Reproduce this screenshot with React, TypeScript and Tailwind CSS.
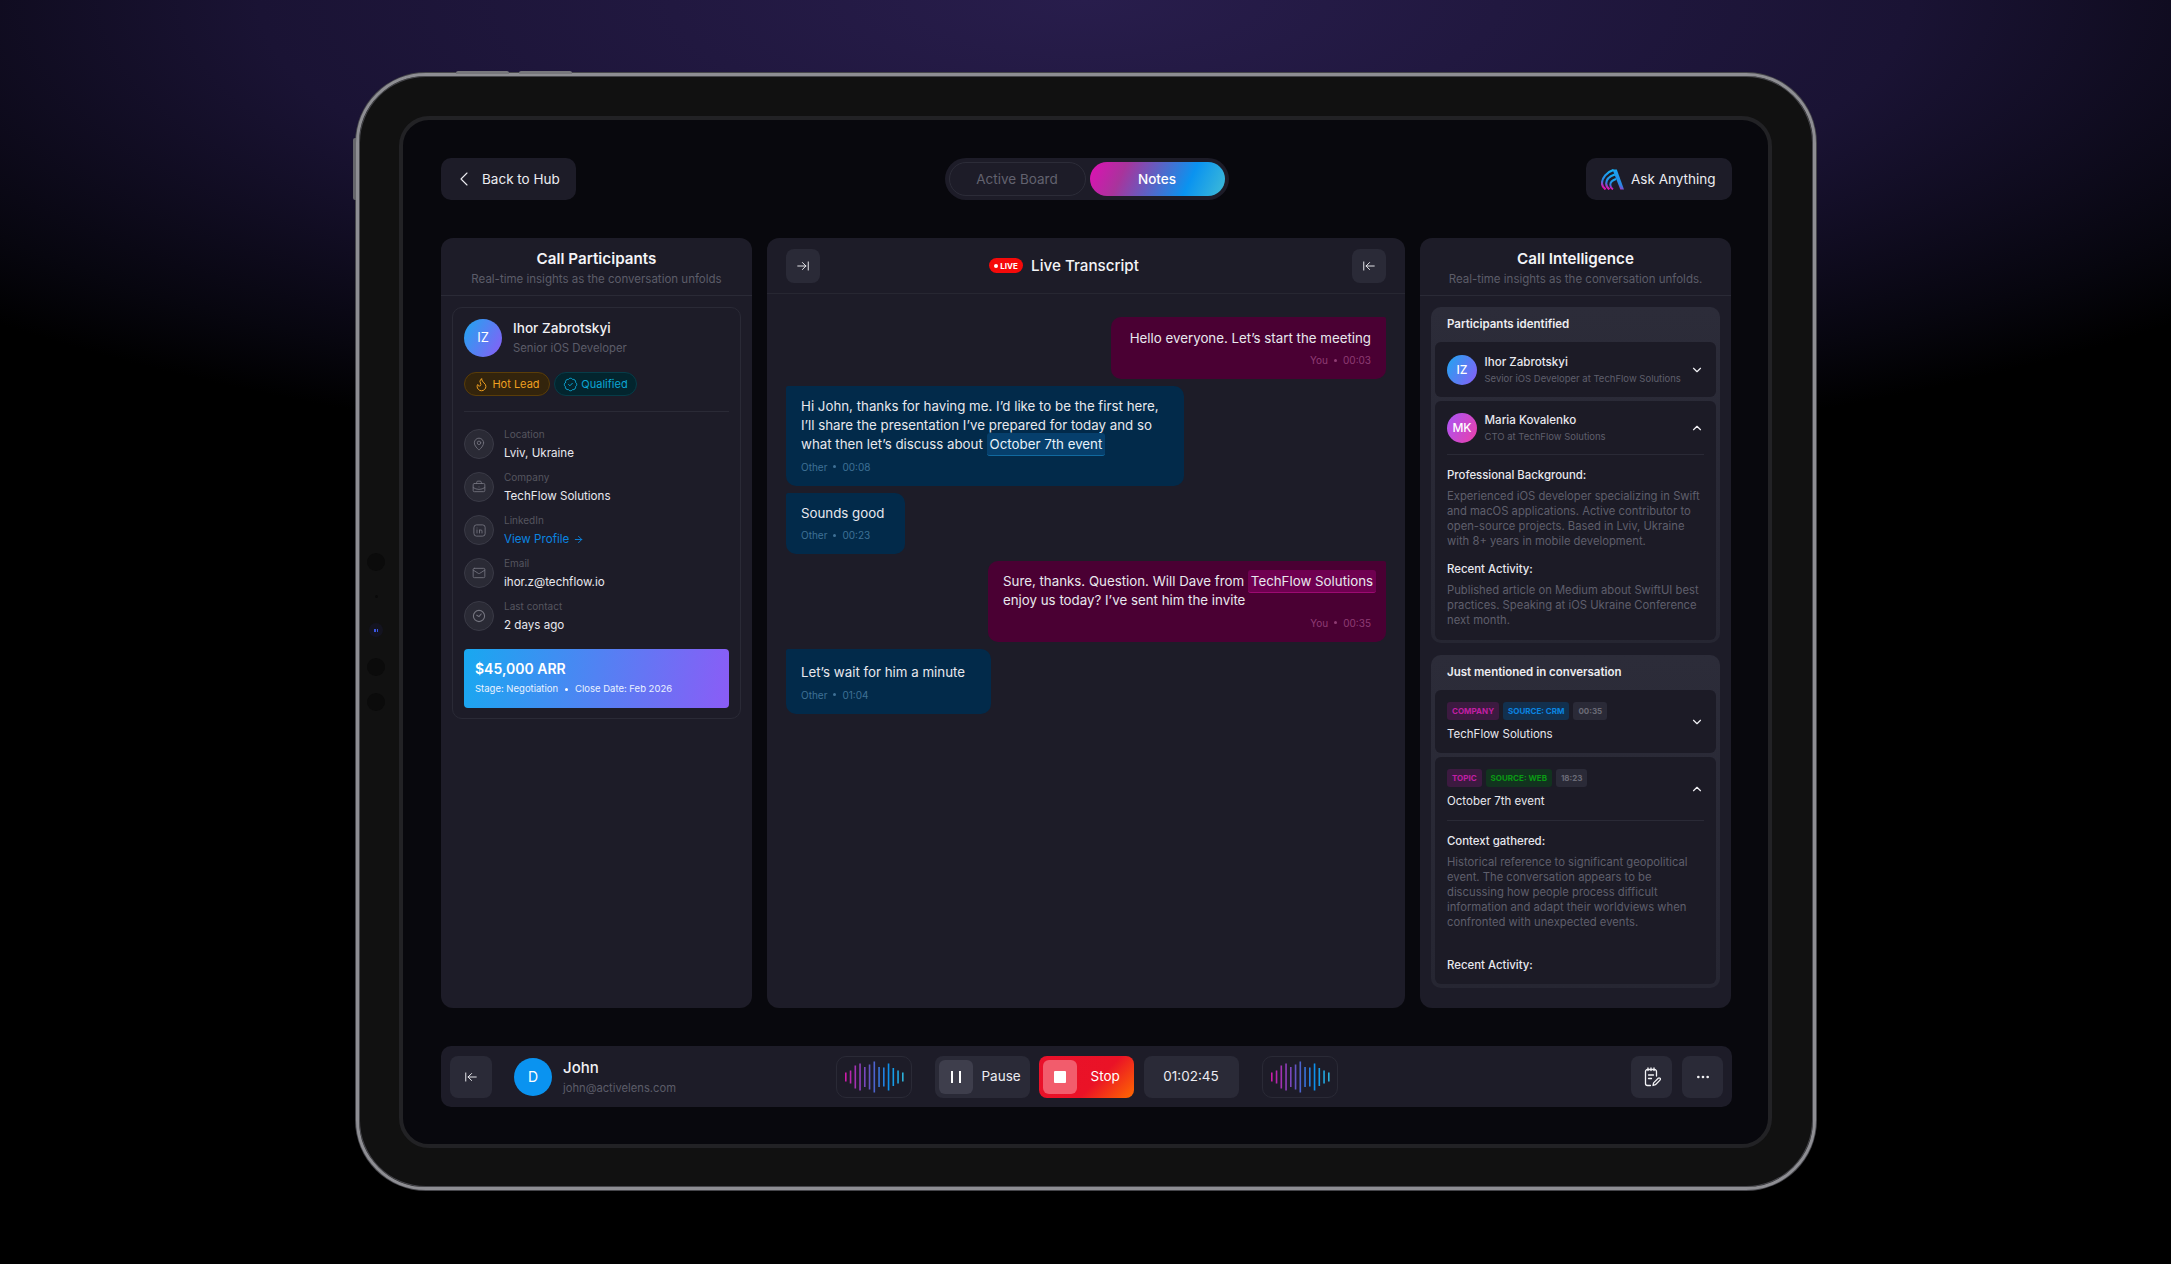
import {
  ArrowLeftToLine,
  ArrowRight,
  ArrowRightToLine,
  BadgeCheck,
  BriefcaseBusiness,
  ChevronDown,
  ChevronLeft,
  ChevronUp,
  Ellipsis,
  Flame,
  Mail,
  MapPin,
} from "lucide-react";
import { TbBrandLinkedin } from "react-icons/tb";
import type { ReactNode } from "react";

const details = [
  { label: "Location", value: "Lviv, Ukraine", icon: <MapPin size={14} strokeWidth={1.5} /> },
  { label: "Company", value: "TechFlow Solutions", icon: <BriefcaseBusiness size={14} strokeWidth={1.5} /> },
  { label: "LinkedIn", value: "link", icon: <TbBrandLinkedin size={15} strokeWidth={1.4} /> },
  { label: "Email", value: "ihor.z@techflow.io", icon: <Mail size={14} strokeWidth={1.5} /> },
  { label: "Last contact", value: "2 days ago", icon: <ClockTick /> },
];

const waveHeights = [9, 13, 23, 27, 20, 25, 31, 20, 19, 27, 18, 13, 9];

function ClockTick() {
  return (
    <svg width="14" height="14" viewBox="0 0 14 14" fill="none" stroke="currentColor" strokeWidth="1.1" strokeLinecap="round">
      <circle cx="7" cy="7" r="5.6" />
      <path d="M4.8 6.2 7 7.6 9.2 5" />
    </svg>
  );
}

function Logo() {
  return (
    <svg width="23" height="21" viewBox="0 0 23 21" fill="none">
      <defs>
        <linearGradient id="logo" x1="0.75" y1="0" x2="0.4" y2="1">
          <stop offset="0" stopColor="#14b0f5" />
          <stop offset="0.7" stopColor="#2a86e4" />
          <stop offset="1" stopColor="#de12ae" />
        </linearGradient>
      </defs>
      <path d="M11.500 .5h4.300L23 20.500h-3.700z" fill="url(#logo)" />
      <path d="M12.500 1C6 2.800.8 9 1 14.500c.1 2.600 1.600 4.500 3.600 5.800" stroke="url(#logo)" strokeWidth="2.200" />
      <path d="M13.800 5.500C9.500 7 5.200 10.300 5.200 14.500c0 2.500 1.400 4.500 3.200 5.800" stroke="url(#logo)" strokeWidth="2.200" />
      <path d="M15 10C12 11 9.300 13 9.300 15.800c0 2 1 3.500 2.700 4.500" stroke="url(#logo)" strokeWidth="2" />
    </svg>
  );
}

function NotesIcon() {
  return (
    <svg width="18" height="20" viewBox="0 0 18 20" fill="none" stroke="#f2f2f5" strokeWidth="1.3" strokeLinecap="round" strokeLinejoin="round">
      <path d="M13.500 9V4.500a2 2 0 0 0-2-2h-7a2 2 0 0 0-2 2v12a2 2 0 0 0 2 2h3" />
      <path d="M5 1v2.500M8 1v2.500M11 1v2.500M5.500 8h5M5.500 11.500h3" />
      <path d="M10 18.500l.6-2.600 4.600-4.600a1.200 1.200 0 0 1 1.800 1.800l-4.600 4.600z" />
    </svg>
  );
}

function Wave({ id }: { id: string }) {
  return (
    <div className="flex h-[42px] w-[76px] items-center justify-center rounded-[10px] border border-[#2a2a36]">
      <svg width="60" height="32" viewBox="0 0 60 32">
        <defs>
          <linearGradient id={id} x1="0" y1="0" x2="60" y2="0" gradientUnits="userSpaceOnUse">
            <stop offset="0" stopColor="#d616a8" />
            <stop offset="0.4" stopColor="#6a4fc0" />
            <stop offset="0.75" stopColor="#0a92ee" />
            <stop offset="1" stopColor="#2fb4d8" />
          </linearGradient>
        </defs>
        {waveHeights.map((h, i) => (
          <rect key={i} x={1 + i * 4.75} y={16 - h / 2} width="1.6" height={h} fill={`url(#${id})`} />
        ))}
      </svg>
    </div>
  );
}

function IconButton({ children, className }: { children: ReactNode; className: string }) {
  return (
    <button className={`flex items-center justify-center rounded-[8px] bg-[#2a2a37] text-[#f2f2f5] ${className}`}>
      {children}
    </button>
  );
}

function Meta({ who, time, tone }: { who: string; time: string; tone: string }) {
  return (
    <p className={`mt-[5.500px] flex items-center gap-[6px] text-[10px] leading-[14px] ${tone}`}>
      <span>{who}</span>
      <span className="h-[3px] w-[3px] rounded-full bg-current" />
      <span>{time}</span>
    </p>
  );
}

function Tag({ text, tone }: { text: string; tone: string }) {
  return (
    <span className={`flex h-[18px] items-center rounded-[3px] px-[5px] text-[8px] font-bold ${tone}`}>
      {text}
    </span>
  );
}

function PersonRow({ initials, gradient, name, role, open }: { initials: string; gradient: string; name: string; role: string; open: boolean }) {
  return (
    <div className={`flex items-center px-[12px] ${open ? "h-[53px]" : "h-[55px]"}`}>
      <div className={`flex h-[30px] w-[30px] items-center justify-center rounded-full text-[12px] font-medium text-white ${gradient}`}>
        {initials}
      </div>
      <div className="ml-[7.500px] min-w-0 flex-1">
        <p className="text-[11.600px] font-medium leading-[16px] text-[#e8e8ee]">{name}</p>
        <p className="mt-[1px] text-[9.500px] leading-[15px] text-[#5f5f6c]">{role}</p>
      </div>
      {open ? <ChevronUp size={14} className="text-[#f0f0f4]" /> : <ChevronDown size={14} className="text-[#f0f0f4]" />}
    </div>
  );
}

function MentionRow({ tags, title, open }: { tags: ReactNode; title: string; open: boolean }) {
  return (
    <div className="flex h-[63px] items-center px-[12px]">
      <div className="flex-1">
        <div className="flex gap-[4px]">{tags}</div>
        <p className="mt-[6px] text-[11.500px] leading-[16px] text-[#e8e8ee]">{title}</p>
      </div>
      {open ? <ChevronUp size={14} className="text-[#f0f0f4]" /> : <ChevronDown size={14} className="text-[#f0f0f4]" />}
    </div>
  );
}

function PanelHeader({ title, subtitle }: { title: string; subtitle: string }) {
  return (
    <div className="h-[58px] border-b border-[#2a2a36] pt-[11px] text-center">
      <h2 className="text-[15.200px] font-semibold leading-[20px] text-[#f4f4f7]">{title}</h2>
      <p className="mt-[1px] text-[11.500px] leading-[18px] text-[#5c5c69]">{subtitle}</p>
    </div>
  );
}

export default function App() {
  return (
    <div className="h-[1264px] w-[2171px] overflow-hidden bg-[radial-gradient(ellipse_1500px_470px_at_1085px_0px,#281d4c_0%,#1a1334_55%,#07060f_88%,#000000_100%)] pl-[356px] pt-[73px] [font-family:Inter,sans-serif]">
      {/* Tablet */}
      <div className="relative h-[1117px] w-[1460px] rounded-[70px] border-[3px] border-[#8e8e93] bg-[#111111] p-[40px] shadow-[0_0_0_1px_#46464b,inset_0_0_0_1px_#46464b]">
        <span className="absolute left-[97px] top-[-5px] h-[3px] w-[53px] rounded-t-[2px] bg-[#77777c]" />
        <span className="absolute left-[160px] top-[-5px] h-[3px] w-[53px] rounded-t-[2px] bg-[#77777c]" />
        <span className="absolute left-[-6px] top-[62px] h-[62px] w-[3px] rounded-l-[2px] bg-[#66666b]" />

        {/* Camera dots */}
        <span className="absolute left-[8px] top-[477px] h-[18px] w-[18px] rounded-full bg-[#0b0b0b]" />
        <span className="absolute left-[15.500px] top-[519px] h-[3px] w-[3px] rounded-full bg-[#0a0a0a]" />
        <span className="absolute left-[10px] top-[547px] flex h-[14px] w-[14px] items-center justify-center gap-[1px] rounded-full bg-[#141420]">
          <i className="h-[3px] w-[1.500px] bg-[#3a56e0]" />
          <i className="h-[3px] w-[1.500px] bg-[#3a56e0]" />
        </span>
        <span className="absolute left-[8px] top-[582px] h-[18px] w-[18px] rounded-full bg-[#0b0b0b]" />
        <span className="absolute left-[8px] top-[617px] h-[18px] w-[18px] rounded-full bg-[#0b0b0b]" />

        {/* Screen */}
        <div className="h-[1032px] w-[1373px] rounded-[30px] border-[4px] border-[#222225] bg-[#08080d] pb-[37px] pl-[38px] pr-[36px] pt-[38px]">
          <div className="grid h-[42px] grid-cols-[1fr_auto_1fr] items-center">
            <button className="flex h-[42px] w-[135px] items-center justify-self-start rounded-[10px] bg-[#1d1c28] pl-[11px] text-[13.500px] text-[#ececf1]">
              <ChevronLeft size={24} strokeWidth={1.1} />
              <span className="ml-[6px]">Back to Hub</span>
            </button>
            <div className="flex h-[42px] w-[284px] items-center gap-[4px] rounded-full bg-[#1d1c28] p-[4px]">
              <span className="flex h-[34px] flex-1 items-center justify-center rounded-full border border-[#2c2c38] text-[13.500px] text-[#62626f]">
                Active Board
              </span>
              <span className="flex h-[34px] flex-1 items-center justify-center rounded-full bg-[linear-gradient(115deg,#e00fb4_0%,#a8349c_25%,#0a93f0_72%,#40bcd6_100%)] text-[13.500px] font-medium text-white">
                Notes
              </span>
            </div>
            <button className="flex h-[42px] w-[146px] items-center justify-self-end rounded-[10px] bg-[#1d1c28] pl-[15px] text-[13.500px] text-[#ececf1]">
              <Logo />
              <span className="ml-[7px]">Ask Anything</span>
            </button>
          </div>

          {/* Panels */}
          <div className="mt-[38px] grid h-[770px] grid-cols-[311px_638px_311px] gap-[15px]">
            <section className="rounded-[12px] bg-[#1d1c28]">
              <PanelHeader title="Call Participants" subtitle="Real-time insights as the conversation unfolds" />
              <div className="mx-[11px] mt-[11px] rounded-[10px] border border-[#2a2a36] px-[11px] pb-[10px] pt-[11px]">
                <div className="flex h-[38px] items-center">
                  <div className="flex h-[38px] w-[38px] items-center justify-center rounded-full bg-[linear-gradient(120deg,#1ea7f0,#8b5cf6)] text-[13px] text-white">
                    IZ
                  </div>
                  <div className="ml-[11px]">
                    <p className="text-[13.600px] font-medium leading-[18px] text-[#f0f0f4]">Ihor Zabrotskyi</p>
                    <p className="mt-[2px] text-[11.300px] leading-[18px] text-[#5c5c69]">Senior iOS Developer</p>
                  </div>
                </div>
                <div className="mt-[15px] flex gap-[4px]">
                  <span className="flex h-[24px] w-[86px] items-center justify-center gap-[3px] rounded-full border border-[#5a3d08] bg-[#33240c] text-[11px] text-[#f0a020]">
                    <Flame size={15} strokeWidth={1.6} />
                    Hot Lead
                  </span>
                  <span className="flex h-[24px] w-[83px] items-center justify-center gap-[3px] rounded-full border border-[#063c48] bg-[#03252e] text-[11px] text-[#0ca6d4]">
                    <BadgeCheck size={15} strokeWidth={1.6} />
                    Qualified
                  </span>
                </div>
                <div className="mt-[15px] h-px bg-[#2a2a36]" />
                <div className="mt-[17px] flex flex-col gap-[13px]">
                  {details.map((d) => (
                    <div key={d.label} className="flex h-[30px] items-center">
                      <div className="flex h-[30px] w-[30px] items-center justify-center rounded-full border border-[#3a3a46] bg-[#2a2a35] text-[#74747f]">
                        {d.icon}
                      </div>
                      <div className="ml-[10px]">
                        <p className="text-[10px] leading-[14px] text-[#55555f]">{d.label}</p>
                        {d.value === "link" ? (
                          <p className="mt-[4px] flex items-center gap-[4px] text-[11.600px] leading-[16px] text-[#0a84e0]">
                            View Profile <ArrowRight size={11} />
                          </p>
                        ) : (
                          <p className="mt-[4px] text-[11.600px] leading-[16px] text-[#e8e8ee]">{d.value}</p>
                        )}
                      </div>
                    </div>
                  ))}
                </div>
                <div className="mt-[18px] h-[59px] rounded-[4px] bg-[linear-gradient(100deg,#18a8f0,#8b5cf6)] px-[11px] pt-[10px] text-white">
                  <p className="text-[14px] font-semibold leading-[20px]">$45,000 ARR</p>
                  <p className="mt-[3px] flex items-center gap-[7px] text-[9.500px] leading-[14px] text-[#eaf2ff]">
                    Stage: Negotiation
                    <span className="h-[3px] w-[3px] rounded-full bg-white" />
                    Close Date: Feb 2026
                  </p>
                </div>
              </div>
            </section>

            <section className="rounded-[12px] bg-[#1d1c28]">
              <div className="flex h-[56px] items-center justify-between border-b border-[#272732] px-[19px]">
                <IconButton className="h-[34px] w-[34px]">
                  <ArrowRightToLine size={14} strokeWidth={1.6} />
                </IconButton>
                <div className="mr-[44px] flex items-center gap-[8px]">
                  <span className="flex h-[15px] w-[34px] items-center justify-center gap-[2px] rounded-full bg-[#f50a0a] text-[8px] font-bold text-white">
                    <i className="h-[4px] w-[4px] rounded-full bg-white" />
                    LIVE
                  </span>
                  <h2 className="text-[15.200px] font-medium leading-[20px] text-[#f4f4f7]">Live Transcript</h2>
                </div>
                <IconButton className="h-[34px] w-[34px]">
                  <ArrowLeftToLine size={14} strokeWidth={1.6} />
                </IconButton>
              </div>
              <div className="flex flex-col gap-[7px] px-[19px] pt-[23px] text-[13.300px] leading-[19px] text-[#e8e8ee]">
                <div className="w-[275px] self-end rounded-[10px] rounded-tr-[2px] bg-[#4a0033] px-[15px] pb-[12px] pt-[11.500px] text-right">
                  <p>Hello everyone. Let’s start the meeting</p>
                  <div className="flex justify-end">
                    <Meta who="You" time="00:03" tone="text-[#8f3c74]" />
                  </div>
                </div>
                <div className="w-[398px] rounded-[10px] rounded-tl-[2px] bg-[#022a4a] px-[15px] pb-[12px] pt-[11px]">
                  <p>
                    Hi John, thanks for having me. I’d like to be the first here, I’ll share the presentation I’ve prepared for today and so what then let’s discuss about{" "}
                    <span className="whitespace-nowrap rounded-[3px] border-b border-[#11699f] bg-[#063f6c] px-[3px] py-[3px] text-[#e8f2fa]">October 7th event</span>
                  </p>
                  <Meta who="Other" time="00:08" tone="text-[#3f7196]" />
                </div>
                <div className="w-[119px] rounded-[10px] rounded-tl-[2px] bg-[#022a4a] px-[15px] pb-[12px] pt-[11px]">
                  <p>Sounds good</p>
                  <Meta who="Other" time="00:23" tone="text-[#3f7196]" />
                </div>
                <div className="w-[398px] self-end rounded-[10px] rounded-tr-[2px] bg-[#4a0033] pb-[12px] pl-[15px] pr-[8px] pt-[11px]">
                  <p>
                    Sure, thanks. Question. Will Dave from{" "}
                    <span className="whitespace-nowrap rounded-[3px] border-b border-[#9c0a72] bg-[#6f0050] px-[3px] py-[3px]">TechFlow Solutions</span>{" "}
                    enjoy us today? I’ve sent him the invite
                  </p>
                  <div className="mr-[7px] flex justify-end">
                    <Meta who="You" time="00:35" tone="text-[#8f3c74]" />
                  </div>
                </div>
                <div className="w-[205px] rounded-[10px] rounded-tl-[2px] bg-[#022a4a] px-[15px] pb-[12px] pt-[14.500px]">
                  <p>Let’s wait for him a minute</p>
                  <Meta who="Other" time="01:04" tone="text-[#3f7196]" />
                </div>
              </div>
            </section>

            <section className="rounded-[12px] bg-[#1d1c28]">
              <PanelHeader title="Call Intelligence" subtitle="Real-time insights as the conversation unfolds." />
              <div className="mx-[11px] mt-[11px] rounded-[10px] bg-[linear-gradient(180deg,#2c2c39_0%,#262632_100%)] px-[4px] pb-[3px]">
                <h3 className="flex h-[35px] items-center pl-[12px] pt-[1px] text-[11.500px] font-semibold text-[#ececf1]">Participants identified</h3>
                <div className="rounded-[6px] bg-[#1c1b26]">
                  <PersonRow initials="IZ" gradient="bg-[linear-gradient(120deg,#1ea7f0,#8b5cf6)]" name="Ihor Zabrotskyi" role="Sevior iOS Developer at TechFlow Solutions" open={false} />
                </div>
                <div className="mt-[4px] h-[239px] rounded-[6px] bg-[#1c1b26]">
                  <PersonRow initials="MK" gradient="bg-[linear-gradient(120deg,#a855f7,#ec3fa8)]" name="Maria Kovalenko" role="CTO at TechFlow Solutions" open />
                  <div className="mx-[12px] h-px bg-[#2a2a36]" />
                  <div className="px-[12px] pt-[12px]">
                    <p className="text-[11.400px] font-medium leading-[16px] text-[#e8e8ee]">Professional Background:</p>
                    <p className="mt-[6px] text-[11.250px] leading-[15px] text-[#5f5f6c]">
                      Experienced iOS developer specializing in Swift and macOS applications. Active contributor to open-source projects. Based in Lviv, Ukraine with 8+ years in mobile development.
                    </p>
                    <p className="mt-[12px] text-[11.400px] font-medium leading-[16px] text-[#e8e8ee]">Recent Activity:</p>
                    <p className="mt-[6px] text-[11.250px] leading-[15px] text-[#5f5f6c]">
                      Published article on Medium about SwiftUI best practices. Speaking at iOS Ukraine Conference next month.
                    </p>
                  </div>
                </div>
              </div>
              <div className="mx-[11px] mt-[12px] rounded-[10px] bg-[linear-gradient(180deg,#2c2c39_0%,#262632_100%)] px-[4px] pb-[4px]">
                <h3 className="flex h-[35px] items-center pl-[12px] pt-[1px] text-[11.500px] font-semibold text-[#ececf1]">Just mentioned in conversation</h3>
                <div className="rounded-[6px] bg-[#1c1b26]">
                  <MentionRow
                    open={false}
                    title="TechFlow Solutions"
                    tags={
                      <>
                        <Tag text="COMPANY" tone="bg-[#3c1a40] text-[#c11fa4]" />
                        <Tag text="SOURCE: CRM" tone="bg-[#12304e] text-[#0a84e0]" />
                        <Tag text="00:35" tone="bg-[#2a2a37] text-[#6a6a76]" />
                      </>
                    }
                  />
                </div>
                <div className="mt-[4px] h-[227px] rounded-[6px] bg-[#1c1b26]">
                  <MentionRow
                    open
                    title="October 7th event"
                    tags={
                      <>
                        <Tag text="TOPIC" tone="bg-[#3c1a40] text-[#c11fa4]" />
                        <Tag text="SOURCE: WEB" tone="bg-[#12331f] text-[#0a9a14]" />
                        <Tag text="18:23" tone="bg-[#2a2a37] text-[#6a6a76]" />
                      </>
                    }
                  />
                  <div className="mx-[12px] h-px bg-[#2a2a36]" />
                  <div className="px-[12px] pt-[12px]">
                    <p className="text-[11.400px] font-medium leading-[16px] text-[#e8e8ee]">Context gathered:</p>
                    <p className="mt-[6px] text-[11.250px] leading-[15px] text-[#5f5f6c]">
                      Historical reference to significant geopolitical event. The conversation appears to be discussing how people process difficult information and adapt their worldviews when confronted with unexpected events.
                    </p>
                    <p className="mt-[27px] text-[11.400px] font-medium leading-[16px] text-[#e8e8ee]">Recent Activity:</p>
                  </div>
                </div>
              </div>
            </section>
          </div>

          {/* Call controls */}
          <div className="mt-[38px] grid h-[61px] grid-cols-[1fr_auto_1fr] items-center rounded-[10px] bg-[#1d1c28] px-[9px]">
            <div className="flex items-center">
              <IconButton className="h-[42px] w-[42px]">
                <ArrowLeftToLine size={14} strokeWidth={1.6} />
              </IconButton>
              <div className="ml-[22px] flex h-[38px] w-[38px] items-center justify-center rounded-full bg-[#0a93f0] text-[14px] text-white">
                D
              </div>
              <div className="ml-[11px] pt-[2px]">
                <p className="text-[15px] font-medium leading-[18px] text-[#f0f0f4]">John</p>
                <p className="mt-[2px] text-[11.200px] leading-[18px] text-[#5c5c69]">john@activelens.com</p>
              </div>
            </div>
            <div className="flex items-center">
              <Wave id="wave-a" />
              <div className="ml-[23px] flex h-[42px] w-[95px] items-center rounded-[8px] bg-[#2a2a37] pl-[4px]">
                <span className="flex h-[34px] w-[34px] items-center justify-center gap-[6px] rounded-[6px] bg-[#3e3e4c]">
                  <i className="h-[12px] w-[2px] bg-white" />
                  <i className="h-[12px] w-[2px] bg-white" />
                </span>
                <span className="ml-[9px] text-[13.500px] text-[#ececf1]">Pause</span>
              </div>
              <div className="ml-[9px] flex h-[42px] w-[95px] items-center rounded-[8px] bg-[linear-gradient(135deg,#e9112b_0%,#ea1226_60%,#ff6a00_100%)] pl-[4px]">
                <span className="flex h-[34px] w-[34px] items-center justify-center rounded-[6px] bg-[#f25c6c]">
                  <i className="h-[12px] w-[12px] rounded-[1px] bg-white" />
                </span>
                <span className="ml-[14px] text-[13.500px] text-white">Stop</span>
              </div>
              <div className="ml-[10px] flex h-[42px] w-[95px] items-center justify-center rounded-[8px] bg-[#2a2a37] text-[13.500px] text-[#ececf1]">
                01:02:45
              </div>
              <div className="ml-[23px]">
                <Wave id="wave-b" />
              </div>
            </div>
            <div className="flex items-center justify-end gap-[10px]">
              <IconButton className="h-[42px] w-[41px]">
                <NotesIcon />
              </IconButton>
              <IconButton className="h-[42px] w-[41px]">
                <Ellipsis size={16} />
              </IconButton>
            </div>
          </div>
        </div>
      </div>
    </div>
  );
}
